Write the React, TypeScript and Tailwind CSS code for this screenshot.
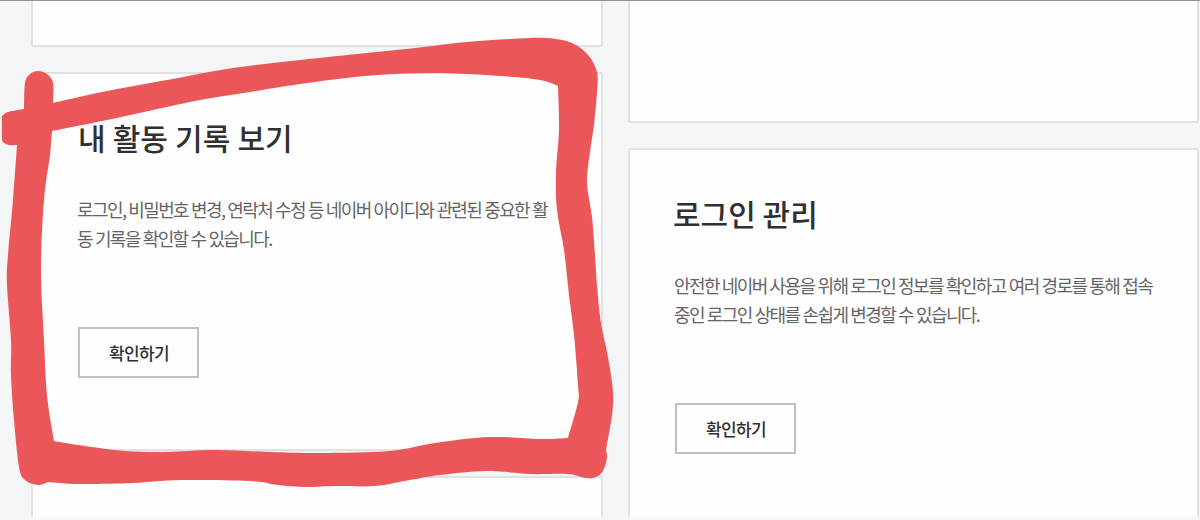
import React from 'react';
import { clsx } from 'clsx';

type Point = [number, number];

// Each list is one smooth run of the marker edge, corners sit between the runs
const OUTER: Point[][] = [
  [[2, 116], [8, 112], [24, 109]],
  [[24, 109], [25, 83], [30, 74], [38, 71], [47, 74], [53, 83], [53, 103]],
  [[53, 103], [107, 91], [167, 80], [233, 68], [300, 60], [367, 53], [415, 48], [467, 42], [510, 39], [547, 38], [572, 43], [588, 55], [597, 72], [597, 92], [594, 125], [590, 152], [587, 183], [592, 217], [595, 255], [597, 285], [601, 323], [608, 357], [613, 392], [612, 415], [606, 450]],
  [[606, 450], [607, 458], [603, 471], [596, 477], [586, 478], [567, 474], [530, 474], [487, 471], [440, 475], [410, 480], [375, 486], [335, 486], [305, 487], [278, 485], [250, 481], [180, 480], [133, 483], [80, 484], [48, 482]],
  [[48, 482], [38, 485], [25, 480], [19, 467], [14, 420], [11, 375], [11, 340], [7, 285], [8, 255], [13, 200], [17, 145]],
  [[17, 145], [9, 145], [3, 142], [2, 137], [2, 116]],
];

const INNER: Point[][] = [
  [[52, 131], [107, 120], [167, 107], [200, 100], [250, 92], [300, 84], [365, 76], [433, 73], [500, 76], [540, 80], [558, 86]],
  [[558, 86], [559, 130], [556, 172], [557, 210], [564, 250], [569, 295], [574, 335], [578, 385], [578, 402], [568, 438]],
  [[568, 438], [540, 439], [490, 437], [435, 443], [390, 451], [320, 453], [270, 452], [215, 450], [165, 452], [125, 451], [85, 446], [54, 441]],
  [[54, 441], [47, 395], [44, 340], [41, 270], [44, 200], [50, 155], [52, 131]],
];

const toPath = (runs: Point[][]) => {
  let d = `M${runs[0][0].join(' ')}`;
  runs.forEach((pts) => {
    for (let i = 0; i < pts.length - 1; i++) {
      const p0 = pts[i - 1] ?? pts[i];
      const p1 = pts[i];
      const p2 = pts[i + 1];
      const p3 = pts[i + 2] ?? p2;
      d += `C${p1[0] + (p2[0] - p0[0]) / 6} ${p1[1] + (p2[1] - p0[1]) / 6} `;
      d += `${p2[0] - (p3[0] - p1[0]) / 6} ${p2[1] - (p3[1] - p1[1]) / 6} ${p2[0]} ${p2[1]}`;
    }
  });
  return d + 'Z';
};

const Marker = () => (
  <svg className="absolute inset-0 pointer-events-none" width="1200" height="520" viewBox="0 0 1200 520">
    <path d={toPath(OUTER) + toPath(INNER)} fill="#eb5759" fillRule="evenodd" />
  </svg>
);

const Card = ({ className, children }: { className?: string; children?: React.ReactNode }) => (
  <section className={clsx('shrink-0 rounded-[3px] border-2 border-[#dfe1e2] bg-[#fefefe]', className)}>
    {children}
  </section>
);

const CardBody = ({ title, lines, titleClass }: { title: string; lines: string[]; titleClass: string }) => (
  <div className="pl-11 pt-10">
    <h2 className={clsx('text-[30px] leading-[46px] font-medium text-[#303030] whitespace-nowrap', titleClass)}>{title}</h2>
    <p className="mt-[35px] text-[18px] leading-[29px] tracking-[-1.6px] [word-spacing:0.5px] font-normal text-[#646464] whitespace-nowrap">
      {lines.map((line) => (
        <span key={line} className="block">{line}</span>
      ))}
    </p>
    <button className="ml-px mt-[74px] flex h-[51px] w-[121px] items-center justify-center border-2 border-[#c0c0c0] pt-px pl-px text-[17px] tracking-[-0.6px] font-medium text-[#303030]">
      확인하기
    </button>
  </div>
);

export default function App() {
  return (
    <div className="relative h-[520px] w-[1200px] overflow-hidden bg-[#f3f5f7] font-['Noto_Sans_CJK_KR',sans-serif]">
      <div className="flex h-full gap-[25px] pl-[31px]">
        <div className="flex w-[572px] shrink-0 flex-col gap-[25px]">
          <Card className="h-[47px] rounded-t-none border-t-0" />
          <Card className="h-[379px]">
            <CardBody
              title="내 활동 기록 보기"
              titleClass="pl-px [word-spacing:0.4px]"
              lines={['로그인, 비밀번호 변경, 연락처 수정 등 네이버 아이디와 관련된 중요한 활', '동 기록을 확인할 수 있습니다.']}
            />
          </Card>
          <Card className="h-[100px]" />
        </div>
        <div className="flex w-[571px] shrink-0 flex-col gap-[25px]">
          <Card className="h-[123px] rounded-t-none border-t-0" />
          <Card className="h-[400px]">
            <CardBody
              title="로그인 관리"
              titleClass="-ml-px"
              lines={['안전한 네이버 사용을 위해 로그인 정보를 확인하고 여러 경로를 통해 접속', '중인 로그인 상태를 손쉽게 변경할 수 있습니다.']}
            />
          </Card>
        </div>
      </div>
      <div className="absolute inset-x-0 top-0 h-px bg-[#929292]" />
      <div className="absolute inset-x-0 bottom-0 h-1.5 bg-linear-to-b from-transparent to-[#f5f6f8]" />
      <Marker />
    </div>
  );
}
